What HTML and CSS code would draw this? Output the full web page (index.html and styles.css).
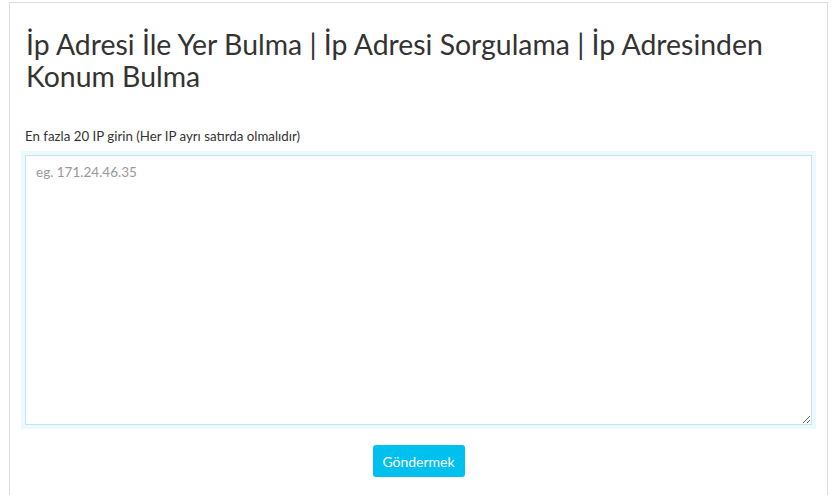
FILE: index.html
```html
<!DOCTYPE html>
<html lang="tr">
<head>
    <meta charset="UTF-8">
    <meta name="viewport" content="width=device-width, initial-scale=1.0">
    <title>İp Adresi İle Yer Bulma</title>
    <link rel="stylesheet" href="styles.css">
</head>
<body>
    <div class="box">
        <h1>İp Adresi İle Yer Bulma | İp Adresi Sorgulama | İp Adresinden Konum Bulma</h1>
        <form class="ip-form">
            <label for="ips">En fazla 20 IP girin (Her IP ayrı satırda olmalıdır)</label>
            <textarea id="ips" name="ips" placeholder="eg. 171.24.46.35"></textarea>
            <div class="actions">
                <button type="submit">Göndermek</button>
            </div>
        </form>
    </div>
</body>
</html>
```

FILE: styles.css
```css
/* Genel */
body {
    margin: 0;
    padding: 2px 0 0 9px;
    font-family: 'Lato', 'Open Sans', sans-serif;
    color: #333;
    background: #fff;
}

.box {
    width: 787px;
    padding: 0 15px 20px 15px;
    border: 1px solid #ddd;
    border-bottom: none;
}

h1 {
    margin: 25px 0 0 1px;
    font-size: 28.4px;
    font-weight: 400;
    line-height: 32px;
    color: #333;
}

.ip-form {
    margin-top: 35px;
}

label {
    display: block;
    font-size: 13.3px;
    line-height: 18px;
    margin-bottom: 10px;
}

textarea {
    display: block;
    width: 787px;
    height: 270px;
    margin: 0;
    padding: 8px 10px;
    box-sizing: border-box;
    border: 1px solid #bfe6f2;
    box-shadow: 0 0 0 4px #eef9fd;
    font-family: inherit;
    font-size: 13.5px;
    color: #333;
    resize: vertical;
    outline: none;
}

textarea::placeholder {
    color: #999;
}

.actions {
    text-align: center;
    margin-top: 20px;
}

button {
    width: 92px;
    height: 32px;
    background-color: #00c0ef;
    color: #fff;
    border: none;
    border-radius: 3px;
    font-family: inherit;
    font-size: 14px;
    cursor: pointer;
}
```
